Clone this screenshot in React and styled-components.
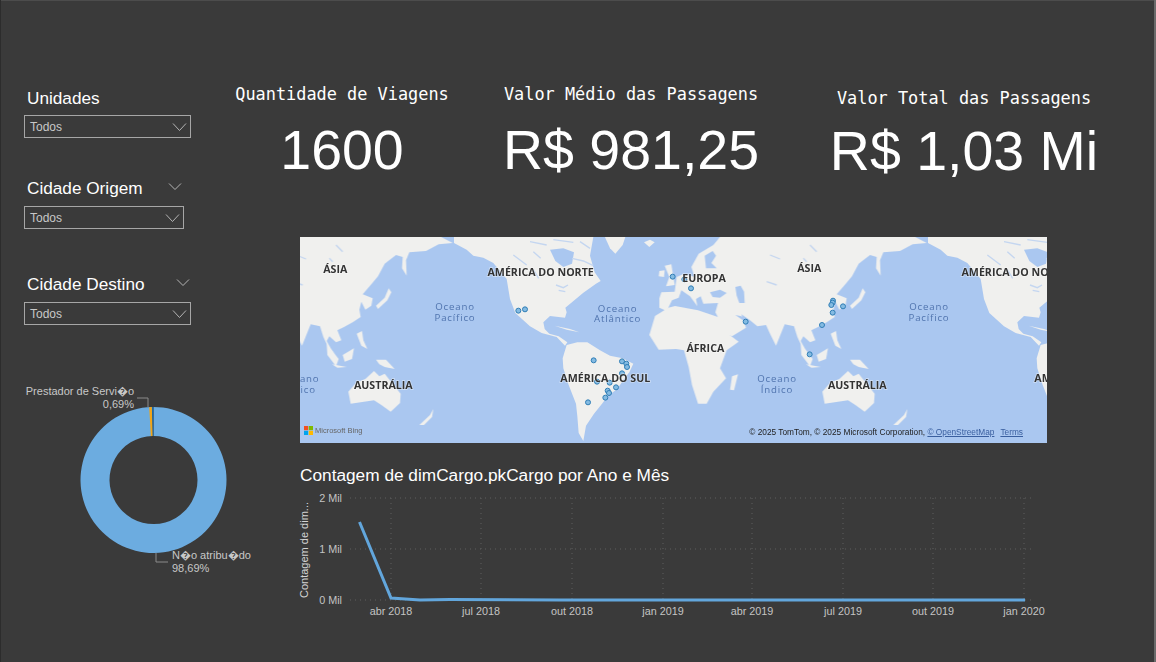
import React from 'react';
import styled, { createGlobalStyle } from 'styled-components';

const GlobalStyle = createGlobalStyle`
    html, body {
        margin:0;
        padding:0;
        background:#3a3a3a;
    }
`

// helpers for the donut
const polar = (r, deg) => {
    const a = (deg - 90) * Math.PI / 180
    return [153.5 + r * Math.cos(a), 73 + r * Math.sin(a)]
}
const ringPath = (from, to, outer, inner) => {
    const large = to - from > 180 ? 1 : 0
    const [x1, y1] = polar(outer, from)
    const [x2, y2] = polar(outer, to)
    const [x3, y3] = polar(inner, to)
    const [x4, y4] = polar(inner, from)
    return `M${x1} ${y1}A${outer} ${outer} 0 ${large} 1 ${x2} ${y2}L${x3} ${y3}A${inner} ${inner} 0 ${large} 0 ${x4} ${y4}Z`
}

const slicers = [
    { label: 'Unidades', width: 167, top: 0, gap: 8, arrow: 0 },
    { label: 'Cidade Origem', width: 160, top: 41, gap: 9, arrow: 25 },
    { label: 'Cidade Destino', width: 167, top: 46, gap: 9, arrow: 31 },
]

const kpis = [
    { title: 'Quantidade de Viagens', value: '1600', width: 236, left: 0, top: 1, gap: 14 },
    { title: 'Valor Médio das Passagens', value: 'R$ 981,25', width: 300, left: 21, top: 1, gap: 14 },
    { title: 'Valor Total das Passagens', value: 'R$ 1,03 Mi', width: 300, left: 33, top: 5, gap: 11 },
]

const gridX = [391, 481, 572, 663, 752, 843, 933, 1024]
const xLabels = ['abr 2018', 'jul 2018', 'out 2018', 'jan 2019', 'abr 2019', 'jul 2019', 'out 2019', 'jan 2020']
const yTicks = [['2 Mil', 498], ['1 Mil', 549], ['0 Mil', 600]]

const pins = [
    [655, 227], [675, 223], [881, 376], [966, 379], [979, 386], [981, 396], [966, 415], [929, 443],
    [891, 440], [948, 457], [923, 467], [927, 474], [916, 488], [864, 502], [1118, 125],
    [1153, 133], [1173, 160], [1337, 260], [1599, 197], [1598, 203], [1594, 210], [1629, 214],
    [1598, 233], [1566, 270], [1529, 358],
]

const labels = [
    ['ÁSIA', 106, 100], ['AMÉRICA DO NORTE', 722, 111], ['AUSTRÁLIA', 250, 450], ['AMÉRICA DO SUL', 916, 428],
    ['EUROPA', 1212, 127], ['ÁSIA', 1528, 99], ['ÁFRICA', 1216, 338], ['AUSTRÁLIA', 1672, 450],
    ['AMÉRICA DO NORTE', 2144, 111], ['AMÉRICA DO SUL', 2338, 428],
]

const oceans = [
    ['Oceano', 'Pacífico', 465, 224, 258], ['Oceano', 'Atlântico', 953, 230, 262], ['Oceano', 'Índico', -1, 441, 473],
    ['Oceano', 'Índico', 1431, 441, 473], ['Oceano', 'Pacífico', 1887, 224, 258],
]

const LandShapes = () => (
    <>
        {/* Americas */}
        <path d="M462 0L462 24L500 44L520 62L550 68L580 84L620 132L630 192L646 234L690 274L725 294L770 306L795 332L802 322L776 304L748 296L734 282L730 262L750 243L795 248L800 232L796 218L850 173L888 146L902 138L884 112L870 62L880 6L882 0Z" />
        <path d="M800 330L832 322L862 322L900 346L930 362L968 370L1000 386L988 412L972 432L952 462L924 482L906 506L882 536L858 572L850 618L836 594L832 544L828 506L806 450L790 400L788 370Z" />
        <path d="M912 0L978 0L968 30L946 56L930 40Z" />
        <path d="M1032 22L1050 14L1064 22L1048 36Z" />
        <path d="M764 272L810 282L838 292L800 284Z" />
        <Water d="M750 44L790 40L822 52L816 86L790 96L766 78Z" />
        <Channel d="M816 70L850 78L880 92" />
        <Channel d="M690 20L740 30M760 14L820 22M840 20L870 40" />
        <Channel d="M640 60L680 90M700 50L722 70M700 104L716 130" />
        <Channel d="M768 150L790 158L804 150M776 166L796 170" />
        {/* Europe and Asia */}
        <g transform="translate(1110 0)">
            <path d="M-32 190L-26 172L14 170L20 126L42 116L74 126L64 96L86 56L130 30L155 0L724 0L770 24L728 28L690 48L640 52L630 76L632 122L618 100L620 66L600 60L566 86L546 124L526 148L500 178L530 190L526 212L508 224L496 200L490 224L494 246L470 262L444 276L424 286L436 316L420 322L400 304L392 318L404 340L418 360L398 340L382 306L372 274L344 268L318 332L300 296L288 270L262 274L238 254L214 238L228 278L186 304L172 298L156 270L136 232L144 204L100 206L92 184L78 192L82 214L60 184L34 166L26 188L6 196L-10 228L-32 218Z" />
            <path d="M-62 300L-45 243L-5 218L15 213L84 226L135 243L150 248L176 298L206 320L170 346L150 400L168 430L130 470L110 506L84 506L66 450L56 396L42 346L18 342L-34 344Z" />
            <path d="M-16 92L4 88L14 150L-12 154L-2 126Z" />
            <path d="M-32 108L-16 106L-18 126L-34 124Z" />
            <path d="M186 424L204 418L192 466L180 464Z" />
            <path d="M540 212L566 188L578 160L586 172L574 196L546 222Z" />
            <path d="M482 296L498 288L502 316L514 342L496 332Z" />
            <path d="M392 326L428 372L420 394L394 360Z" />
            <path d="M440 360L474 340L468 372L446 380Z" />
            <path d="M408 388L452 396L424 398Z" />
            <path d="M540 374L570 374L596 402L566 396L550 388Z" />
            <path d="M670 570L702 540L712 522L708 546L684 570Z" />
            <Water d="M196 156L212 152L222 170L224 204L208 204L200 182Z" />
            <Water d="M120 172L150 164L170 174L150 188L128 186Z" />
            <Water d="M196 240L214 244L244 262L222 258Z" />
            <Water d="M104 62L128 48L138 62L124 84L140 100L108 100Z" />
            <Channel d="M300 60L330 72M420 30L440 50M290 140L320 150M400 70L410 80" />
        </g>
        {/* Australia */}
        <path d="M145 470L170 442L196 432L222 408L238 424L254 416L276 444L302 476L300 504L272 530L244 510L222 496L192 500L152 506Z" />
    </>
)

const App = () => {
    return (
        <Page>
            <GlobalStyle />
            <Sidebar>
                {slicers.map(s => (
                    <Slicer key={s.label} $top={s.top}>
                        <SlicerHead $gap={s.arrow}>
                            <SlicerLabel>{s.label}</SlicerLabel>
                            {s.arrow > 0 && <Chevron width="14" height="7" viewBox="0 0 14 7"><path d="M1 .5l6 6 6-6" /></Chevron>}
                        </SlicerHead>
                        <Dropdown $width={s.width} $gap={s.gap}>
                            <span>Todos</span>
                            <Chevron width="15" height="8" viewBox="0 0 15 8"><path d="M1 .5l6.5 7 6.5-7" /></Chevron>
                        </Dropdown>
                    </Slicer>
                ))}
                <DonutSvg width="260" height="206" viewBox="0 0 260 206">
                    <path fill="#6cace0" d={ringPath(0, 358.7, 73, 44)} />
                    <path fill="#1f6aa5" d={ringPath(358.7, 360, 73, 44)} />
                    <path fill="#f2a516" d={ringPath(356.6, 358.7, 73, 44)} />
                    <LeaderLine d="M137 -9H148V0" />
                    <LeaderLine d="M156 146V155H168" />
                    <ChartLabel x="134" y="-12" textAnchor="end">Prestador de Servi�o</ChartLabel>
                    <ChartLabel x="134" y="1" textAnchor="end">0,69%</ChartLabel>
                    <ChartLabel x="172" y="152">N�o atribu�do</ChartLabel>
                    <ChartLabel x="172" y="165">98,69%</ChartLabel>
                </DonutSvg>
            </Sidebar>
            <Main>
                <KpiRow>
                    {kpis.map(k => (
                        <Kpi key={k.title} $width={k.width} $left={k.left} $top={k.top}>
                            <KpiTitle>{k.title}</KpiTitle>
                            <KpiValue $gap={k.gap}>{k.value}</KpiValue>
                        </Kpi>
                    ))}
                </KpiRow>
                <MapBox>
                    <MapSvg viewBox="0 0 2241 618">
                        <rect width="2241" height="618" fill="#aac7f0" />
                        <LandGroup transform="translate(0 -6)">
                            <use href="#land" x="-1422" />
                            <g id="land"><LandShapes /></g>
                            <use href="#land" x="1422" />
                        </LandGroup>
                        <g transform="translate(0 -6)">
                            {pins.map(([x, y], i) => (
                                <Pin key={i} cx={x} cy={y} r="7.5" />
                            ))}
                            {oceans.map(([a, b, x, y1, y2], i) => (
                                <OceanLabel key={i} x={x}>
                                    <tspan x={x} y={y1}>{a}</tspan>
                                    <tspan x={x} y={y2}>{b}</tspan>
                                </OceanLabel>
                            ))}
                            {labels.map(([t, x, y], i) => (
                                <RegionLabel key={i} x={x} y={y + 13}>{t}</RegionLabel>
                            ))}
                        </g>
                    </MapSvg>
                    <BingMark>
                        <svg width="9" height="9" viewBox="0 0 9 9">
                            <rect width="4.2" height="4.2" fill="#f25022" />
                            <rect x="4.8" width="4.2" height="4.2" fill="#7fba00" />
                            <rect y="4.8" width="4.2" height="4.2" fill="#00a4ef" />
                            <rect x="4.8" y="4.8" width="4.2" height="4.2" fill="#ffb900" />
                        </svg>
                        Microsoft Bing
                    </BingMark>
                    <Attribution>
                        © 2025 TomTom, © 2025 Microsoft Corporation, <u>© OpenStreetMap</u><TermsLink>Terms</TermsLink>
                    </Attribution>
                </MapBox>
                <ChartTitle>Contagem de dimCargo.pkCargo por Ano e Mês</ChartTitle>
                <ChartSvg width="780" height="140" viewBox="280 490 780 140">
                    {yTicks.map(([t, y]) => (
                        <g key={t}>
                            <GridLine x1="350" x2="1032" y1={y} y2={y} />
                            <AxisText x="342" y={y + 4} textAnchor="end">{t}</AxisText>
                        </g>
                    ))}
                    {gridX.map((x, i) => (
                        <g key={x}>
                            <GridLine x1={x} x2={x} y1="498" y2="600" />
                            <AxisText x={x} y="615" textAnchor="middle">{xLabels[i]}</AxisText>
                        </g>
                    ))}
                    <AxisTitle transform="translate(308 598) rotate(-90)">Contagem de dim...</AxisTitle>
                    <TrendLine points="359.5,522 391,598 420,600 450,599.5 560,600 1025,600" />
                </ChartSvg>
            </Main>
        </Page>
    )
}

const Page = styled.div`
    width:1156px;
    height:662px;
    box-sizing:border-box;
    background:#3a3a3a;
    display:flex;
    overflow:hidden;
    font-family:"Liberation Sans", Arial, sans-serif;
    box-shadow:inset 1px 0 0 #2c2c2c, inset -2px 0 0 #6a6a6a, inset 0 1px 0 #4c4c4c;
`

const Sidebar = styled.aside`
    width:224px;
    flex:none;
    padding:89px 0 0 24px;
    box-sizing:border-box;
`

const Slicer = styled.div`
    margin-top:${p => p.$top}px;
`

const SlicerHead = styled.div`
    height:18px;
    display:flex;
    align-items:center;
    gap:${p => p.$gap}px;
    padding-left:3px;
    svg{
        margin-top:-3px;
    }
`

const SlicerLabel = styled.span`
    font-size:17.2px;
    color:#fff;
    white-space:nowrap;
`

const Chevron = styled.svg`
    fill:none;
    stroke:#b4b4b4;
    stroke-width:1;
    flex:none;
`

const Dropdown = styled.div`
    width:${p => p.$width}px;
    height:23px;
    margin-top:${p => p.$gap}px;
    box-sizing:border-box;
    border:1px solid #a6a6a6;
    display:flex;
    align-items:center;
    justify-content:space-between;
    padding:1px 3px 0 5px;
    font-size:12px;
    color:#c8c8c8;
`

const DonutSvg = styled.svg`
    display:block;
    overflow:visible;
    margin:82px 0 0 -24px;
`

const LeaderLine = styled.path`
    fill:none;
    stroke:#8a8a8a;
    stroke-width:1;
`

const ChartLabel = styled.text`
    font-size:11px;
    fill:#c8c8c8;
`

const Main = styled.main`
    flex:1;
    min-width:0;
    padding-top:82px;
`

const KpiRow = styled.div`
    display:flex;
    align-items:flex-start;
    height:155px;
`

const Kpi = styled.div`
    width:${p => p.$width}px;
    margin-left:${p => p.$left}px;
    margin-top:${p => p.$top}px;
    text-align:center;
    flex:none;
`

const KpiTitle = styled.div`
    font-family:"DejaVu Sans Mono", monospace;
    font-size:16.9px;
    line-height:22px;
    color:#fff;
    white-space:nowrap;
`

const KpiValue = styled.div`
    font-size:55.5px;
    line-height:62px;
    margin-top:${p => p.$gap}px;
    color:#fff;
    white-space:nowrap;
`

const MapBox = styled.div`
    position:relative;
    width:747px;
    height:206px;
    margin-left:76px;
    overflow:hidden;
`

const MapSvg = styled.svg`
    display:block;
    width:747px;
    height:206px;
`

const LandGroup = styled.g`
    fill:#f0f0ee;
    filter:blur(1.4px);
`

const Water = styled.path`
    fill:#aac7f0;
`

const Channel = styled.path`
    fill:none;
    stroke:#c4d6f0;
    stroke-width:4;
`

const Pin = styled.circle`
    fill:#84bbe2;
    stroke:#2f7db5;
    stroke-width:3;
`

const RegionLabel = styled.text`
    font-family:"Open Sans", sans-serif;
    font-size:32px;
    font-weight:700;
    fill:#333;
    text-anchor:middle;
    stroke:rgba(255,255,255,.45);
    stroke-width:4px;
    paint-order:stroke;
`

const OceanLabel = styled.text`
    font-family:"Open Sans", sans-serif;
    font-size:29px;
    letter-spacing:2.5px;
    fill:#5074ae;
    text-anchor:middle;
`

const BingMark = styled.div`
    position:absolute;
    left:4px;
    bottom:8px;
    display:flex;
    align-items:center;
    gap:2px;
    font-size:7.5px;
    color:#666;
`

const Attribution = styled.div`
    position:absolute;
    right:24px;
    bottom:6px;
    font-size:8.3px;
    color:#222;
    white-space:nowrap;
    u{
        color:#3a5f9f;
    }
`

const TermsLink = styled.u`
    margin-left:6px;
`

const ChartTitle = styled.h2`
    margin:22px 0 0 76px;
    font-size:17.25px;
    line-height:20px;
    font-weight:400;
    color:#fff;
    white-space:nowrap;
`

const ChartSvg = styled.svg`
    display:block;
    margin:5px 0 0 56px;
`

const GridLine = styled.line`
    stroke:#5f5f5f;
    stroke-width:1;
    stroke-dasharray:1 4;
`

const AxisText = styled.text`
    font-size:10.8px;
    fill:#c4c4c4;
`

const AxisTitle = styled.text`
    font-size:11px;
    fill:#d4d4d4;
`

const TrendLine = styled.polyline`
    fill:none;
    stroke:#62a6dc;
    stroke-width:3;
`

export default App
